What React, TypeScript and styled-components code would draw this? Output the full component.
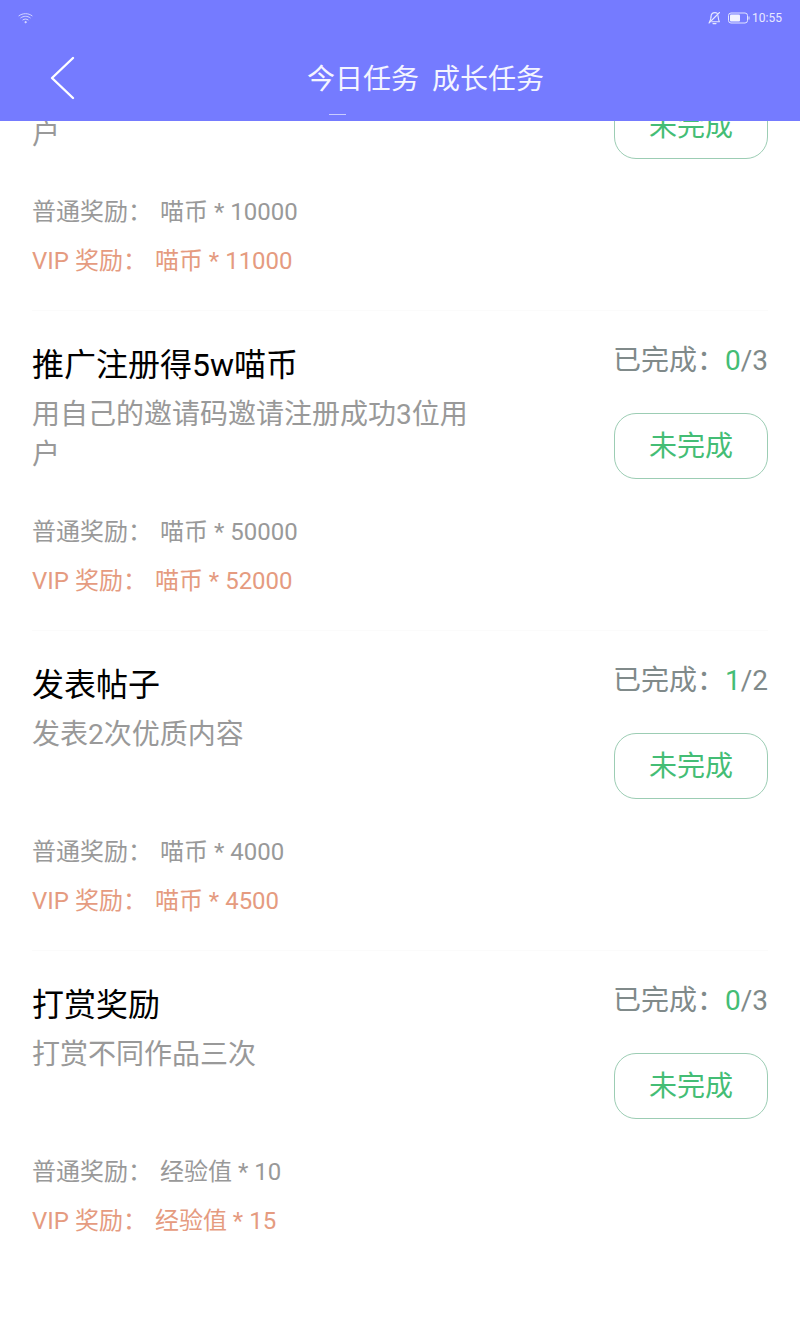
import styled, {createGlobalStyle} from 'styled-components'

type Task = {
    title?: string
    desc: string
    progress?: [number, number]
    normal: string
    vip: string
}

// the first one is scrolled under the header, only its lower part shows
const tasks: Task[] = [
    {
        desc: '户',
        normal: '喵币 * 10000',
        vip: '喵币 * 11000',
    },
    {
        title: '推广注册得5w喵币',
        desc: '用自己的邀请码邀请注册成功3位用户',
        progress: [0, 3],
        normal: '喵币 * 50000',
        vip: '喵币 * 52000',
    },
    {
        title: '发表帖子',
        desc: '发表2次优质内容',
        progress: [1, 2],
        normal: '喵币 * 4000',
        vip: '喵币 * 4500',
    },
    {
        title: '打赏奖励',
        desc: '打赏不同作品三次',
        progress: [0, 3],
        normal: '经验值 * 10',
        vip: '经验值 * 15',
    },
]

const App = () => (
    <>
        <GlobalStyle />
        <Page>
            <Header>
                <StatusBar>
                    <svg width="15" height="12" viewBox="0 0 16 12" fill="none" stroke="#d9dbff" strokeWidth="1" strokeLinecap="round">
                        <path d="M1 3.6C5 .6 11 .6 15 3.6" />
                        <path d="M3 5.8c3-2.2 7-2.2 10 0" />
                        <path d="M5.2 8c1.7-1.2 3.9-1.2 5.6 0" />
                        <circle cx="8" cy="10.4" r=".7" fill="#d9dbff" />
                    </svg>
                    <StatusRight>
                        <svg width="14" height="14" viewBox="0 0 14 14" fill="none" stroke="#e6e7ff" strokeWidth="1.1" strokeLinecap="round" strokeLinejoin="round">
                            <path d="M2 12 12.5 1.5" />
                            <path d="M4 6c0-2.4 1.6-4.4 4-4.4.9 0 1.7.3 2.3.8" />
                            <path d="M11 4.6c.3 2.4.4 4.4 1.4 6.2H4.8" />
                            <path d="M4 6c0 1.6-.4 3.2-1.4 4.8" />
                            <path d="M6 12.6h3" />
                        </svg>
                        <svg width="22" height="12" viewBox="0 0 22 12" fill="none">
                            <rect x=".5" y="1" width="19" height="10" rx="2.5" stroke="#e2e4ff" />
                            <rect x="2" y="2.5" width="10" height="7" rx="1" fill="#f2f3ff" />
                            <rect x="20.5" y="4.5" width="1" height="3" fill="#e2e4ff" />
                        </svg>
                        <Clock>10:55</Clock>
                    </StatusRight>
                </StatusBar>
                <NavBar>
                    <BackButton>
                        <svg width="26" height="44" viewBox="0 0 26 44" fill="none" stroke="#fff" strokeWidth="2.4" strokeLinecap="round" strokeLinejoin="round">
                            <path d="M23 2 2 22l21 20" />
                        </svg>
                    </BackButton>
                    <Tabs>
                        <Tab $active>今日任务</Tab>
                        <Tab>成长任务</Tab>
                    </Tabs>
                </NavBar>
            </Header>
            <Scroller>
                <TaskList>
                    {tasks.map((task) => (
                        <TaskItem key={task.normal}>
                            <TaskTop>
                                <TaskInfo $cut={!task.title}>
                                    {task.title && <TaskTitle>{task.title}</TaskTitle>}
                                    <TaskDesc>{task.desc}</TaskDesc>
                                </TaskInfo>
                                <TaskSide>
                                    {task.progress && (
                                        <Progress>
                                            已完成：<ProgressDone>{task.progress[0]}</ProgressDone>/{task.progress[1]}
                                        </Progress>
                                    )}
                                    <StatusButton>未完成</StatusButton>
                                </TaskSide>
                            </TaskTop>
                            <Reward>
                                <RewardLabel>普通奖励：</RewardLabel>
                                {task.normal}
                            </Reward>
                            <Reward $vip>
                                <RewardLabel>VIP 奖励：</RewardLabel>
                                {task.vip}
                            </Reward>
                        </TaskItem>
                    ))}
                </TaskList>
            </Scroller>
        </Page>
    </>
)

export default App

const GlobalStyle = createGlobalStyle`
    html, body {
        margin: 0;
        padding: 0;
        background: #fff;
    }
    body {
        font-family: Roboto, 'Noto Sans CJK SC', sans-serif;
    }
`

const Page = styled.div`
    display: flex;
    flex-direction: column;
    width: 800px;
    height: 1333px;
    overflow: hidden;
    background: #fff;
`

const Header = styled.header`
    flex: none;
    height: 121px;
    background: #757bff;
`

const StatusBar = styled.div`
    display: flex;
    align-items: center;
    justify-content: space-between;
    height: 36px;
    padding: 0 18px;
`

const StatusRight = styled.div`
    display: flex;
    align-items: center;
    gap: 7px;
`

const Clock = styled.span`
    margin-left: -5px;
    font-size: 12px;
    color: #e8e9ff;
`

const NavBar = styled.div`
    position: relative;
    display: flex;
    justify-content: center;
    height: 85px;
`

const BackButton = styled.div`
    position: absolute;
    left: 50px;
    top: 20px;
    line-height: 0;
`

const Tabs = styled.div`
    display: flex;
    gap: 13px;
    margin-left: 51px;
    padding-top: 24px;
`

const Tab = styled.div<{$active?: boolean}>`
    position: relative;
    height: 40px;
    font-size: 28px;
    line-height: 40px;
    color: #f4f5ff;

    ${({$active}) =>
        $active &&
        `
        &::after {
            content: '';
            position: absolute;
            left: 22px;
            top: 54px;
            width: 17px;
            height: 1px;
            background: #c9ccff;
        }
    `}
`

const Scroller = styled.div`
    flex: 1;
    overflow: hidden;
`

const TaskList = styled.div`
    margin-top: -131px;
`

const TaskItem = styled.div`
    box-sizing: border-box;
    height: 320px;
    margin: 0 32px;
    padding-top: 29px;
    border-top: 1px solid #fbfbfb;
`

const TaskTop = styled.div`
    display: flex;
    justify-content: space-between;
    height: 172px;
`

const TaskInfo = styled.div<{$cut?: boolean}>`
    width: 440px;
    padding-top: ${({$cut}) => ($cut ? '95px' : '5px')};
`

const TaskTitle = styled.div`
    margin-bottom: 10px;
    font-size: 32px;
    line-height: 40px;
    color: #000;
`

const TaskDesc = styled.div`
    font-size: 28px;
    line-height: 40px;
    color: #999;
`

const TaskSide = styled.div`
    display: flex;
    flex-direction: column;
    align-items: flex-end;
    justify-content: flex-end;
    gap: 32px;
    height: 139px;
`

const Progress = styled.div`
    font-size: 28px;
    line-height: 40px;
    color: #808a8a;
`

const ProgressDone = styled.span`
    color: #44bd75;
`

const StatusButton = styled.div`
    box-sizing: border-box;
    width: 154px;
    height: 66px;
    border: 1px solid #9ccdb4;
    border-radius: 22px;
    font-size: 28px;
    line-height: 66px;
    text-align: center;
    color: #44bd75;
`

const Reward = styled.div<{$vip?: boolean}>`
    display: flex;
    height: 49px;
    font-size: 24px;
    line-height: 40px;
    color: ${({$vip}) => ($vip ? '#e59b80' : '#999')};
`

const RewardLabel = styled.span`
    margin-right: 8px;
`
